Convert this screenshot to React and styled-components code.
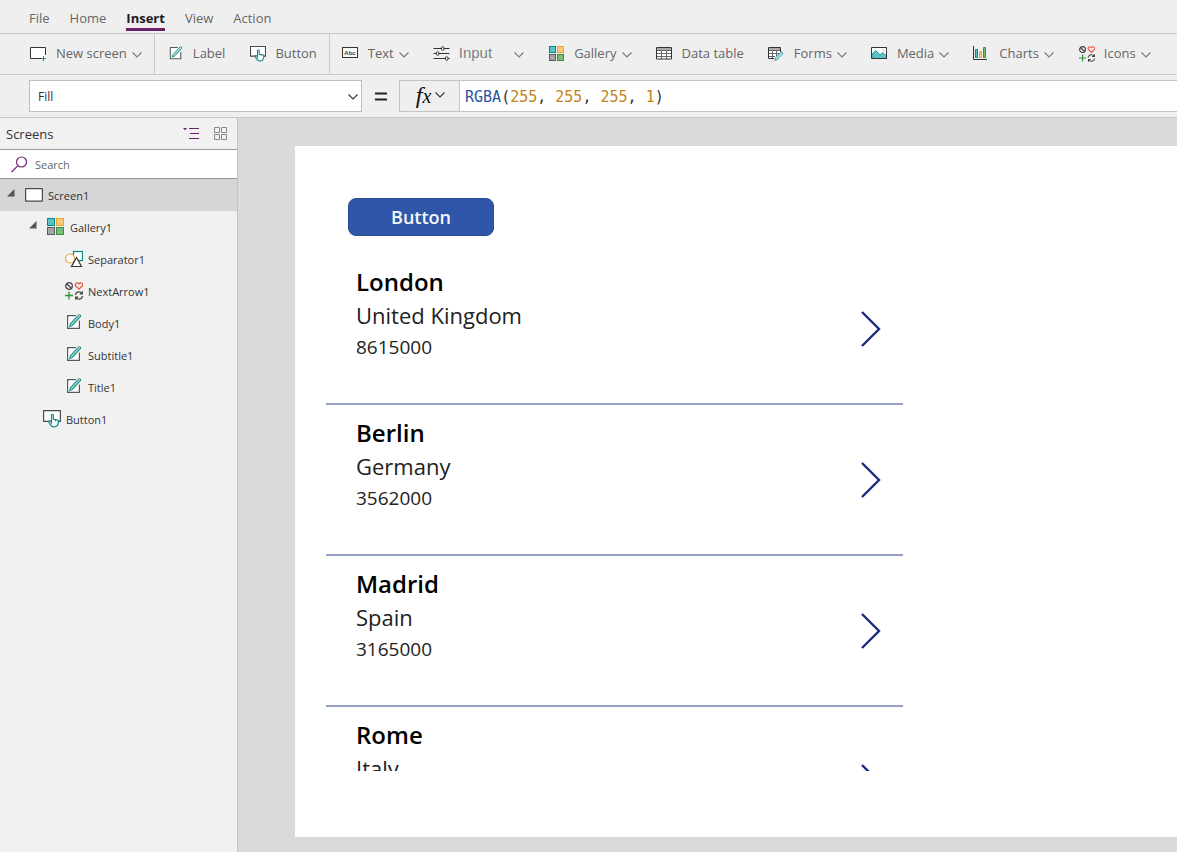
import React from "react";
import styled, { createGlobalStyle } from "styled-components";

const GlobalStyle = createGlobalStyle`
  * { box-sizing: border-box; }
  body {
    margin: 0;
    background: #efefef;
    color: #333;
    font: 13px/20px "Open Sans", "Noto Sans", sans-serif;
  }
  button, input, select { font: inherit; color: inherit; }
  button { border: 0; padding: 0; background: none; cursor: pointer; }
  svg { display: block; flex: none; }
`;

const Shell = styled.div`
  min-height: 100vh;
  display: flex;
  flex-direction: column;
`;

const MenuBar = styled.nav`
  display: flex;
  gap: 20px;
  height: 34px;
  padding: 8px 29px 0;
  border-bottom: 1px solid #c8c8c8;
`;

const MenuTab = styled.button`
  height: ${(p) => (p.$active ? 23 : 20)}px;
  color: ${(p) => (p.$active ? "#1b1b1b" : "#666")};
  font-weight: ${(p) => (p.$active ? 700 : 400)};
  border-bottom: ${(p) => (p.$active ? "3px solid #6b2168" : "0")};
`;

const Toolbar = styled.div`
  display: flex;
  height: 41px;
  padding-left: 18px;
  border-bottom: 1px solid #c8c8c8;
`;

const ToolGroup = styled.div`
  display: flex;
  & + & { border-left: 1px solid #c8c8c8; }
`;

const ToolButton = styled.button`
  display: flex;
  align-items: center;
  padding: 0 12px 2px;
  color: #666;
  white-space: nowrap;
`;

const ToolIcon = styled.span`
  display: flex;
  justify-content: center;
  width: 18px;
  margin: 2px 8px 0 0;
`;

const ToolLabel = styled.span`
  ${(p) => p.$large && `
    font: 15px/20px "Liberation Sans", Arial, sans-serif;
    color: #828282;
    margin-right: 17px;
  `}
`;

const ToolChevron = styled.svg`
  margin: 4px 0 0 5px;
`;

const FormulaBar = styled.div`
  display: flex;
  align-items: center;
  height: 43px;
  padding-left: 29px;
  border-bottom: 1px solid #c8c8c8;
`;

const PropertyPicker = styled.div`
  position: relative;
  width: 333px;
  svg { position: absolute; right: 4px; top: 14px; pointer-events: none; }
`;

const PropertySelect = styled.select`
  appearance: none;
  display: block;
  width: 100%;
  height: 32px;
  padding: 2px 24px 0 8px;
  border: 1px solid #bdbdbd;
  border-radius: 0;
  background: #fff;
  font-size: 12px;
`;

const Equals = styled.span`
  width: 37px;
  display: flex;
  justify-content: center;
  padding-top: 2px;
`;

const FormulaField = styled.div`
  flex: 1;
  display: flex;
  height: 32px;
  border: 1px solid #c4c4c4;
  border-right: 0;
`;

const FunctionButton = styled.button`
  display: flex;
  align-items: center;
  justify-content: center;
  gap: 4px;
  width: 60px;
  padding: 0 0 2px 2px;
  border-right: 1px solid #c4c4c4;
  font: italic 24px/28px "Liberation Serif", "Times New Roman", serif;
  color: #111;
`;

const FunctionVariable = styled.span`
  font-size: 20px;
`;

const Formula = styled.div`
  flex: 1;
  padding-left: 5px;
  background: #fff;
  font: 15px/32px "DejaVu Sans Mono", monospace;
  white-space: pre;
  outline: 0;
`;

const FunctionName = styled.span` color: #2a56a0; `;
const NumberToken = styled.span` color: #c28319; `;

const Workspace = styled.div`
  flex: 1;
  display: flex;
`;

const Sidebar = styled.aside`
  width: 238px;
  flex: none;
  border-right: 1px solid #c4c4c4;
  background: #f1f1f1;
`;

const SidebarHeader = styled.header`
  display: flex;
  align-items: center;
  gap: 13px;
  height: 31px;
  padding: 0 9px 0 6px;
`;

const SidebarTitle = styled.h2`
  flex: 1;
  margin: 0;
  font-size: 13px;
  font-weight: 400;
`;

const SearchBox = styled.label`
  display: flex;
  align-items: center;
  gap: 7px;
  height: 30px;
  padding-left: 11px;
  border: solid #999;
  border-width: 1px 0;
  background: #fff;
`;

const SearchInput = styled.input`
  flex: 1;
  min-width: 0;
  border: 0;
  padding: 2px 0 0;
  outline: 0;
  background: none;
  font-size: 11px;
  &::placeholder { color: #666; opacity: 1; }
`;

const Tree = styled.ul`
  list-style: none;
  margin: 0;
  padding: 0;
`;

const TreeRow = styled.button`
  display: flex;
  align-items: center;
  width: 100%;
  height: 32px;
  padding-left: ${(p) => p.$depth * 22 + (p.$leaf ? 21 : 7)}px;
  background: ${(p) => (p.$selected ? "#d6d6d6" : "none")};
  font-size: 11px;
  text-align: left;
`;

const Twisty = styled.svg`
  margin: 0 10px 4px 0;
`;

const TreeLabel = styled.span`
  margin-left: 5px;
  padding-top: 2px;
`;

const Stage = styled.main`
  flex: 1;
  display: flex;
  min-width: 0;
  padding: 28px 0 15px 57px;
  background: #dadada;
`;

const Screen = styled.section`
  flex: 1;
  min-width: 0;
  padding: 52px 31px 66px;
  background: #fff;
`;

const ScreenButton = styled.button`
  display: block;
  width: 146px;
  height: 38px;
  margin-left: 22px;
  border: 1px solid #2c4c94;
  border-radius: 8px;
  background: #3056a9;
  color: #f4f6fb;
  font-size: 18px;
  font-weight: 600;
`;

const Gallery = styled.ul`
  list-style: none;
  max-width: 577px;
  height: 517px;
  margin: 18px 0 0;
  padding: 0;
  overflow: hidden;
`;

const GalleryItem = styled.li`
  display: flex;
  align-items: center;
  justify-content: space-between;
  height: 151px;
  padding: 0 22px 0 30px;
  border-bottom: 2px solid #969fc5;
`;

const CityDetails = styled.div`
  height: 129px;
`;

const City = styled.h3`
  margin: 0;
  color: #000;
  font-size: 24px;
  line-height: 35px;
  font-weight: 600;
`;

const Country = styled.p`
  margin: 0;
  color: #222;
  font-size: 22px;
  line-height: 32px;
`;

const Population = styled.p`
  margin: 0;
  color: #222;
  font-size: 19px;
  line-height: 32px;
`;

const NextButton = styled.button`
  height: 36px;
`;

const Chevron = ({ as: As = "svg", color = "#777" }) => (
  <As width="10" height="6" viewBox="0 0 10 6" fill="none" stroke={color} strokeWidth="1.1">
    <path d="M.5 .5 5 5 9.500 .5" />
  </As>
);

const NewScreenIcon = () => (
  <svg width="18" height="18" viewBox="0 0 18 18" fill="none">
    <path d="M.5 2.500h15v11H.5z" fill="#fff" />
    <path d="M11 13.500H.5v-11h15V10" stroke="#333" />
    <path d="M13.500 11v5M11 13.500h5" stroke="#2f9138" />
  </svg>
);

const LabelIcon = ({ size = 18 }) => (
  <svg width={size} height={size} viewBox="0 0 18 18" fill="none">
    <path d="M11.500 1.600H2.600v12.800h11.800V5.500" fill="#fff" />
    <path d="M11 1.600H2.600v12.800h11.800V6.500" stroke="#5a5a5a" strokeWidth="1.200" />
    <path d="m4.800 12.500.8-2.900 8-8.500c1.100-1 2.700.4 1.700 1.600l-7.900 8.700z" fill="#e6f5f4" stroke="#118a88" strokeWidth="1.100" />
    <path d="m6.500 10.700 7.500-8" stroke="#118a88" strokeWidth=".5" />
  </svg>
);

const ButtonIcon = ({ size = 18 }) => (
  <svg width={size} height={size} viewBox="0 0 18 18" fill="none">
    <path d="M.6.600h16.800v10.800H.6z" fill="#fff" />
    <path d="M6.500 11.400H.6V.600h16.800v10.800H15.500" stroke="#4a4a4a" strokeWidth="1.200" />
    <path d="M8.500 11V5.300c0-1.200 1.900-1.200 1.900 0v4l4 .6c.7.2 1.100.6 1.100 1.300 0 3.300-1.500 5.600-4.700 5.600-2.300 0-3.400-1.500-4.900-4.900-.2-1.100 1-1.600 1.600-.8l1 1.700z" fill="#fff" stroke="#118a88" strokeWidth="1.200" />
    <path d="M12.500 9.800v1.500" stroke="#118a88" />
  </svg>
);

const TextIcon = () => (
  <svg width="18" height="18" viewBox="0 0 18 18">
    <rect x=".5" y="2.500" width="15" height="10" fill="#f7f7f7" stroke="#333" />
    <text x="8" y="10" textAnchor="middle" fontFamily="Liberation Sans" fontWeight="700" fontSize="6" fill="#444">Abc</text>
  </svg>
);

const InputIcon = () => (
  <svg width="18" height="18" viewBox="0 0 18 18" fill="#fff" stroke="#333">
    <path d="M.5 3.500h16M.5 8.500h16M.5 13.500h16" />
    <rect x="8.500" y="1.700" width="2.400" height="3.600" rx="1.100" />
    <rect x="3.500" y="6.700" width="2.400" height="3.600" rx="1.100" />
    <rect x="12.500" y="11.700" width="2.400" height="3.600" rx="1.100" />
  </svg>
);

const GalleryIcon = ({ size = 18 }) => {
  const cell = size === 18 ? 7 : 6;
  const second = cell + 2.5;
  return (
    <svg width={size} height={size} viewBox={`0 0 ${size} ${size}`}>
      <rect x=".5" y=".5" width={cell} height={cell} fill="#5bc3c5" stroke="#078987" />
      <rect x={second} y=".5" width={cell} height={cell} fill="#fdc878" stroke="#f3a332" />
      <rect x=".5" y={second} width={cell} height={cell} fill="#a9a6a7" stroke="#5b5b5b" />
      <rect x={second} y={second} width={cell} height={cell} fill="#7cbc7b" stroke="#349239" />
    </svg>
  );
};

const TableIcon = () => (
  <svg width="18" height="18" viewBox="0 0 18 18" fill="none">
    <path d="M.5 2h15v12H.5z" fill="#fff" />
    <path d="M1 2h14v3H1z" fill="#aaa" />
    <path d="M1 5.500h14M1 8.500h14M1 11.500h14M5.500 5v9M10.500 5v9" stroke="#666" />
    <path d="M.5 2.500h15v11.500H.5z" stroke="#333" />
  </svg>
);

const FormsIcon = () => (
  <svg width="18" height="18" viewBox="0 0 18 18" fill="none">
    <path d="M.5 2.500h12v11H.5z" fill="#fff" />
    <path d="M1 3h11v2H1z" fill="#aaa" />
    <path d="M1 5.500h12M1 8.500h12M1 11.500h6M4.500 5v9M8.500 5v6" stroke="#666" />
    <path d="M6 13.500H.5v-11h12V7" stroke="#333" />
    <path d="m6.800 15.400.8-2.600 5.200-5.400c1.100-1 2.700.6 1.700 1.700L9.300 14.600z" fill="#e0f3f2" stroke="#2aa09f" />
    <path d="m8.200 13.600 5-5.200" stroke="#2aa09f" strokeWidth=".6" />
  </svg>
);

const MediaIcon = () => (
  <svg width="18" height="18" viewBox="0 0 18 18">
    <path d="M.5 2.500h15v11H.5z" fill="#fff" />
    <path d="m1 9 3.800-3.500L9 10l2.500-2.500L15.500 11v2.500H1z" fill="#5bc3c5" stroke="#078987" strokeWidth=".8" />
    <circle cx="12.500" cy="5.500" r=".8" fill="#f3a332" />
    <path d="M.5 2.500h15v11H.5z" fill="none" stroke="#333" />
  </svg>
);

const ChartsIcon = () => (
  <svg width="18" height="18" viewBox="0 0 18 18" fill="none">
    <path d="M.5 1v13.500H14" stroke="#333" />
    <path d="M2.500 4.500h2v8h-2z" fill="#5bc3c5" stroke="#078987" />
    <path d="M6.500 6.500h2v6h-2z" fill="#fdc878" stroke="#f3a332" />
    <path d="M10.500 2.500h2v10h-2z" fill="#7cbc7b" stroke="#349239" />
  </svg>
);

const IconsIcon = ({ size = 18 }) => (
  <svg width={size} height={size} viewBox="0 0 18 18" fill="none">
    <circle cx="4" cy="4" r="3.300" stroke="#444" strokeWidth="1.300" />
    <path d="m1.700 1.700 4.600 4.600" stroke="#444" strokeWidth="1.300" />
    <path d="M14 7.200 10.800 4C9 1.800 12.200-.300 14 1.900c1.800-2.200 5-.1 3.200 2.100z" stroke="#ea5037" strokeWidth="1.200" />
    <path d="M4 9.500v8M0 13.500h8" stroke="#2f9138" strokeWidth="1.300" />
    <path d="M10.500 13c.3-3.600 4.700-4.200 6.600-1.500M17.300 9.300v2.500h-2.500M17.500 14c-.3 3.600-4.700 4.200-6.600 1.500M10.700 17.700v-2.500h2.500" stroke="#444" strokeWidth="1.200" />
  </svg>
);

const ScreenIcon = () => (
  <svg width="18" height="18" viewBox="0 0 18 18">
    <rect x=".6" y="2.600" width="16.800" height="12.600" rx=".5" fill="#fff" stroke="#4a4a4a" strokeWidth="1.200" />
  </svg>
);

const ShapesIcon = () => (
  <svg width="18" height="18" viewBox="0 0 18 18" fill="#fff">
    <rect x="8.500" y="1.500" width="9" height="9" stroke="#078987" strokeWidth="1.200" />
    <circle cx="5" cy="8.500" r="4.500" stroke="#f3a332" strokeWidth="1.200" />
    <path d="m11.500 7.500 5 9h-10z" stroke="#333" strokeWidth="1.200" />
  </svg>
);

const OutlineIcon = () => (
  <svg width="18" height="14" viewBox="0 0 18 14" fill="none">
    <path d="M0 1h4L2 3.200z" fill="#6b2168" />
    <path d="M6 1.500h10M7 6.500h9M6 11.500h10" stroke="#6b2168" strokeWidth="1.200" />
  </svg>
);

const TilesIcon = () => (
  <svg width="14" height="14" viewBox="0 0 14 14" fill="none" stroke="#888">
    <path d="M.5 .5h5v5h-5zM7.500 .5h5v5h-5zM.5 7.500h5v5h-5zM7.500 7.500h5v5h-5z" />
  </svg>
);

const SearchIcon = () => (
  <svg width="17" height="17" viewBox="0 0 17 17" fill="none" stroke="#742774" strokeWidth="1.200">
    <circle cx="10.500" cy="6" r="5" />
    <path d="M7 9.600.5 16" />
  </svg>
);

const toolGroups = [
  [{ label: "New screen", icon: NewScreenIcon, menu: true }],
  [{ label: "Label", icon: LabelIcon }, { label: "Button", icon: ButtonIcon }],
  [
    { label: "Text", icon: TextIcon, menu: true },
    { label: "Input", icon: InputIcon, menu: true, large: true },
    { label: "Gallery", icon: GalleryIcon, menu: true },
    { label: "Data table", icon: TableIcon },
    { label: "Forms", icon: FormsIcon, menu: true },
    { label: "Media", icon: MediaIcon, menu: true },
    { label: "Charts", icon: ChartsIcon, menu: true },
    { label: "Icons", icon: IconsIcon, menu: true },
  ],
];

const treeItems = [
  { label: "Screen1", icon: ScreenIcon, depth: 0, selected: true },
  { label: "Gallery1", icon: GalleryIcon, depth: 1 },
  { label: "Separator1", icon: ShapesIcon, depth: 2, leaf: true },
  { label: "NextArrow1", icon: IconsIcon, depth: 2, leaf: true },
  { label: "Body1", icon: LabelIcon, depth: 2, leaf: true },
  { label: "Subtitle1", icon: LabelIcon, depth: 2, leaf: true },
  { label: "Title1", icon: LabelIcon, depth: 2, leaf: true },
  { label: "Button1", icon: ButtonIcon, depth: 1, leaf: true },
];

const cities = [
  { city: "London", country: "United Kingdom", population: "8615000" },
  { city: "Berlin", country: "Germany", population: "3562000" },
  { city: "Madrid", country: "Spain", population: "3165000" },
  { city: "Rome", country: "Italy" },
];

export default function App() {
  return (
    <Shell>
      <GlobalStyle />
      <MenuBar>
        {["File", "Home", "Insert", "View", "Action"].map((name) => (
          <MenuTab key={name} $active={name === "Insert"}>{name}</MenuTab>
        ))}
      </MenuBar>
      <Toolbar>
        {toolGroups.map((tools, i) => (
          <ToolGroup key={i}>
            {tools.map(({ label, icon: Icon, menu, large }) => (
              <ToolButton key={label}>
                <ToolIcon><Icon size={16} /></ToolIcon>
                <ToolLabel $large={large}>{label}</ToolLabel>
                {menu && <Chevron as={ToolChevron} />}
              </ToolButton>
            ))}
          </ToolGroup>
        ))}
      </Toolbar>
      <FormulaBar>
        <PropertyPicker>
          <PropertySelect aria-label="Property" defaultValue="Fill">
            <option>Fill</option>
          </PropertySelect>
          <Chevron color="#333" />
        </PropertyPicker>
        <Equals>
          <svg width="12" height="10" viewBox="0 0 12 10" role="img" aria-label="equals">
            <path d="M0 1.500h12M0 7.500h12" stroke="#222" strokeWidth="2" />
          </svg>
        </Equals>
        <FormulaField>
          <FunctionButton aria-label="Insert function">
            <span>f<FunctionVariable>x</FunctionVariable></span>
            <Chevron color="#333" />
          </FunctionButton>
          <Formula role="textbox" aria-label="Formula" contentEditable suppressContentEditableWarning spellCheck={false}>
            <FunctionName>RGBA</FunctionName>(<NumberToken>255</NumberToken>, <NumberToken>255</NumberToken>, <NumberToken>255</NumberToken>, <NumberToken>1</NumberToken>)
          </Formula>
        </FormulaField>
      </FormulaBar>
      <Workspace>
        <Sidebar>
          <SidebarHeader>
            <SidebarTitle>Screens</SidebarTitle>
            <button aria-label="Tree view"><OutlineIcon /></button>
            <button aria-label="Thumbnail view"><TilesIcon /></button>
          </SidebarHeader>
          <SearchBox>
            <SearchIcon />
            <SearchInput type="search" placeholder="Search" aria-label="Search" />
          </SearchBox>
          <Tree>
            {treeItems.map(({ label, icon: Icon, depth, leaf, selected }) => (
              <li key={label}>
                <TreeRow $depth={depth} $leaf={leaf} $selected={selected}>
                  {!leaf && (
                    <Twisty width="8" height="8" viewBox="0 0 8 8"><path d="M7.500 0v7.500H0z" fill="#555" /></Twisty>
                  )}
                  <Icon />
                  <TreeLabel>{label}</TreeLabel>
                </TreeRow>
              </li>
            ))}
          </Tree>
        </Sidebar>
        <Stage>
          <Screen>
            <ScreenButton>Button</ScreenButton>
            <Gallery>
              {cities.map(({ city, country, population }) => (
                <GalleryItem key={city}>
                  <CityDetails>
                    <City>{city}</City>
                    <Country>{country}</Country>
                    {population && <Population>{population}</Population>}
                  </CityDetails>
                  <NextButton aria-label={`Open ${city}`}>
                    <svg width="20" height="36" viewBox="0 0 20 36" fill="none" stroke="#1b2a7b" strokeWidth="2.400">
                      <path d="m1 1 17 17L1 35" />
                    </svg>
                  </NextButton>
                </GalleryItem>
              ))}
            </Gallery>
          </Screen>
        </Stage>
      </Workspace>
    </Shell>
  );
}
